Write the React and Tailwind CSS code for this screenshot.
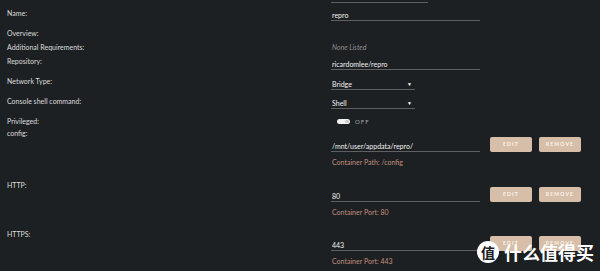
import React from "react";

const font = { fontFamily: '"Lato", "Open Sans", sans-serif' };

function Label({ children, pt }) {
  return (
    <div className={`w-[331px] shrink-0 pl-[7px] text-[7px] leading-[10px] text-[#dcdcdc] ${pt}`}>
      {children}
    </div>
  );
}

function Field({ value, width = "w-[149px]", select = false }) {
  return (
    <div className={`${width} flex items-center justify-between border-b border-[#5e6062] pl-[1px] pr-[3px] text-[7px] leading-[10px] text-[#f2f2f2]`}>
      <span>{value}</span>
      {select && <span className="text-[5px] leading-[10px] text-white">▼</span>}
    </div>
  );
}

function Btn({ children }) {
  return (
    <div className="flex h-[15px] w-[42px] items-center justify-center rounded-[2px] bg-[#d7bea8] text-[5px] font-bold tracking-[1.2px] text-[#fbf5ef]">
      {children}
    </div>
  );
}

function PathRow({ label, value, hint, h, labelPt }) {
  return (
    <div className={`flex ${h}`}>
      <Label pt={labelPt}>{label}</Label>
      <div className="flex flex-col pt-[9px]">
        <div className="flex items-end">
          <Field value={value} />
          <div className="ml-[10px] flex gap-[7px]">
            <Btn>EDIT</Btn>
            <Btn>REMOVE</Btn>
          </div>
        </div>
        <div className="mt-[5px] pl-[1px] text-[7px] leading-[10px] text-[#c08f7e]">{hint}</div>
      </div>
    </div>
  );
}

export default function App() {
  return (
    <div className="relative h-[271px] w-[600px] overflow-hidden bg-[#1d2023]" style={font}>
      <div className="h-[3px]">
        <div className="ml-[331px] h-[3px] w-[97px] border-b border-[#5e6062]" />
      </div>

      <div className="flex h-[24px]">
        <Label pt="pt-[5px]">Name:</Label>
        <div className="pt-[7px]">
          <Field value="repro" />
        </div>
      </div>

      <div className="flex h-[13px]">
        <Label pt="pt-[1px]">Overview:</Label>
      </div>

      <div className="flex h-[14px]">
        <Label pt="pt-[2px]">Additional Requirements:</Label>
        <div className="pt-[2px] pl-[1px] text-[7px] italic leading-[10px] text-[#8d8f91]">None Listed</div>
      </div>

      <div className="flex h-[20px]">
        <Label pt="pt-[2px]">Repository:</Label>
        <div className="pt-[5px]">
          <Field value="ricardomlee/repro" />
        </div>
      </div>

      <div className="flex h-[20px]">
        <Label pt="pt-[2px]">Network Type:</Label>
        <div className="pt-[5px]">
          <Field value="Bridge" width="w-[84px]" select />
        </div>
      </div>

      <div className="flex h-[20px]">
        <Label pt="pt-[2px]">Console shell command:</Label>
        <div className="pt-[4px]">
          <Field value="Shell" width="w-[84px]" select />
        </div>
      </div>

      <div className="flex h-[14px]">
        <Label pt="pt-[2px]">Privileged:</Label>
        <div className="flex items-center gap-[5px] pl-[6px] pt-[1px]">
          <div className="flex h-[5px] w-[13px] items-center rounded-full bg-[#f2f2f2]">
            <div className="ml-auto mr-[1px] h-[3px] w-[4px] rounded-full bg-[#c9c9c9]" />
          </div>
          <span className="text-[6px] leading-[10px] tracking-[1px] text-[#a8a8a8]">OFF</span>
        </div>
      </div>

      <PathRow label="config:" value="/mnt/user/appdata/repro/" hint="Container Path: /config" h="h-[50px]" labelPt="pt-0" />
      <PathRow label="HTTP:" value="80" hint="Container Port: 80" h="h-[49px]" labelPt="pt-[2px]" />
      <PathRow label="HTTPS:" value="443" hint="Container Port: 443" h="h-[49px]" labelPt="pt-[2px]" />

      <div className="absolute left-[477px] top-[241px] flex items-center gap-[5px]">
        <div
          className="flex h-[22px] w-[22px] items-center justify-center rounded-full bg-white text-[14px] font-bold text-[#1d2023]"
          style={{ fontFamily: '"Noto Sans CJK SC", sans-serif' }}
        >
          值
        </div>
        <span
          className="text-[18px] font-bold leading-[20px] text-white"
          style={{ fontFamily: '"Noto Sans CJK SC", sans-serif' }}
        >
          什么值得买
        </span>
      </div>
    </div>
  );
}
